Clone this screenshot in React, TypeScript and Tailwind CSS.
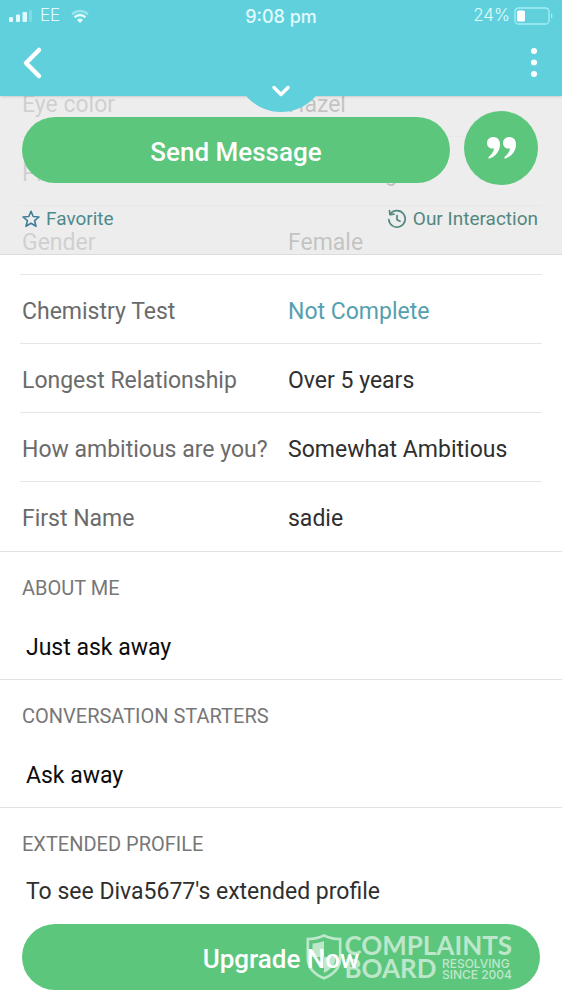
import React from 'react';
import { ChevronDown } from 'lucide-react';

interface Detail {
  label: string;
  value: string;
  pending?: boolean;
}

interface Section {
  title: string;
  text: string;
}

const details: Detail[] = [
  { label: 'Eye color', value: 'Hazel' },
  { label: 'Profession', value: 'Consulting' },
  { label: 'Gender', value: 'Female' },
  { label: 'Chemistry Test', value: 'Not Complete', pending: true },
  { label: 'Longest Relationship', value: 'Over 5 years' },
  { label: 'How ambitious are you?', value: 'Somewhat Ambitious' },
  { label: 'First Name', value: 'sadie' }
];

const sections: Section[] = [
  { title: 'About me', text: 'Just ask away' },
  { title: 'Conversation starters', text: 'Ask away' }
];

const StatusBar: React.FC = () => (
  <div className="grid grid-cols-3 items-center px-2 h-8 font-['Inter',sans-serif] text-[17px] text-[#e2fbff]">
    <div className="flex items-center gap-2">
      <svg className="w-6 h-3" viewBox="0 0 24 12" fill="currentColor">
        <rect x="1" y="7" width="4" height="5" rx="1" />
        <rect x="8" y="4.500" width="4" height="7.500" rx="1" />
        <rect x="14.500" y="2" width="4.500" height="10" rx="1" />
        <rect x="21" y="0" width="3" height="12" rx="1" opacity="0.25" />
      </svg>
      <span className="font-light">EE</span>
      <svg className="ml-[2px] w-5 h-4" viewBox="0 0 20 16" fill="none" stroke="currentColor">
        <path d="M2 6.300a11.500 11.500 0 0 1 16 0" strokeWidth="2.400" opacity="0.45" />
        <path d="M4.700 9.200a7.600 7.600 0 0 1 10.600 0" strokeWidth="2.600" />
        <path d="M10 15l-3-3a4.300 4.300 0 0 1 6 0z" fill="currentColor" stroke="none" />
      </svg>
    </div>
    <span className="text-center text-[18px] font-medium">9:08 pm</span>
    <div className="flex items-center justify-end gap-1">
      <span className="font-light">24%</span>
      <svg className="w-10 h-5" viewBox="0 0 40 20" fill="none">
        <rect x="1" y="2" width="34" height="16" rx="3.500" stroke="#a4eef5" strokeWidth="1.300" />
        <rect x="3" y="4.500" width="8" height="11" rx="1.500" fill="white" />
        <path d="M37 7.500c2 1 2 4 0 5z" fill="#a4eef5" />
      </svg>
    </div>
  </div>
);

const Header: React.FC = () => (
  <header className="relative z-20 h-24 bg-[#5fd0dc] text-white shadow-sm">
    <button
      className="absolute -bottom-4 left-1/2 -translate-x-1/2 flex items-end justify-center w-[92px] h-[92px] pb-[7px] bg-[#5fd0dc] rounded-full"
      aria-label="Show photos"
    >
      <ChevronDown className="w-7 h-7" strokeWidth={3} />
    </button>
    <div className="relative">
      <StatusBar />
      <div className="flex items-center justify-between pl-2 pr-4 h-12">
        <button className="pt-3" aria-label="Back">
          <svg className="w-12 h-9" viewBox="0 0 48 36" fill="none" stroke="currentColor" strokeWidth="4.500" strokeLinecap="round" strokeLinejoin="round">
            <path d="M31 6L18 19l13 13" />
          </svg>
        </button>
        <button className="pt-3" aria-label="More options">
          <svg className="w-6 h-9" viewBox="0 0 24 36" fill="currentColor">
            <circle cx="12" cy="7" r="3" />
            <circle cx="12" cy="18.500" r="3" />
            <circle cx="12" cy="30" r="3" />
          </svg>
        </button>
      </div>
    </div>
  </header>
);

const ActionPanel: React.FC = () => (
  <div className="absolute top-0 inset-x-0 z-10 h-[159px] pt-[15px] pl-[22px] pr-6 bg-[#e8e8e8]/80 border-b border-[#dcdcdc]">
    <div className="flex items-end gap-[14px]">
      <button className="flex-1 h-[66px] mb-[2px] pt-1 bg-[#5cc67d] rounded-full text-white text-[26px] font-medium">
        Send Message
      </button>
      <button
        className="flex items-center justify-center w-[74px] h-[74px] bg-[#5cc67d] rounded-full text-white"
        aria-label="Icebreakers"
      >
        <svg className="w-8 h-6" viewBox="0 0 32 24" fill="currentColor">
          <path d="M8.500 1C4.800 1 2 3.500 2 7c0 3.300 2.400 5.600 5.500 5.600.6 0 1.100-.1 1.500-.2-.4 3.400-2.300 6-5.400 8.500-.8.700 0 2.100 1.100 1.600C11 19.800 15 14.800 15 8.400 15 3.800 12.400 1 8.500 1z" />
          <path d="M24.500 1C20.800 1 18 3.500 18 7c0 3.300 2.400 5.600 5.500 5.600.6 0 1.100-.1 1.500-.2-.4 3.400-2.300 6-5.400 8.500-.8.700 0 2.100 1.100 1.600C27 19.800 31 14.800 31 8.400 31 3.800 28.400 1 24.500 1z" />
        </svg>
      </button>
    </div>
    <div className="flex items-center justify-between mt-[22px] text-[19px] leading-6">
      <button className="flex items-center gap-[6px] text-[#4f8a8b]">
        <svg className="w-[18px] h-[18px]" viewBox="0 0 18 18" fill="none" stroke="#3f7f98" strokeWidth="1.600" strokeLinejoin="round">
          <path d="M9 1.300l2.200 5.200 5.800.5-4.400 3.700 1.400 5.600L9 13.300l-5 3 1.400-5.600L1 7l5.800-.5z" />
        </svg>
        Favorite
      </button>
      <button className="flex items-center gap-[6px] text-[#54877f]">
        <svg className="w-[20px] h-[20px]" viewBox="0 0 20 20" fill="none" stroke="currentColor" strokeWidth="1.700" strokeLinecap="round" strokeLinejoin="round">
          <path d="M3.200 5.300A8.200 8.200 0 1 1 1.800 10.500" />
          <path d="M2.500 1.500L3 5.600l4-.4" />
          <path d="M10 6.500v4.300l3 1.400" />
        </svg>
        Our Interaction
      </button>
    </div>
  </div>
);

const Watermark: React.FC = () => (
  <div className="absolute inset-y-0 right-7 flex items-center gap-[2px] text-white/60 font-['Lato',sans-serif] font-bold pointer-events-none">
    <svg className="w-9 h-[46px]" viewBox="0 0 36 46" fill="none">
      <path d="M18 1.500C13 4 7 5 1.800 5v19c0 10 7 16.500 16.200 20.300C27.200 40.500 34.200 34 34.200 24V5C29 5 23 4 18 1.500z" stroke="currentColor" strokeWidth="2.600" />
      <path d="M18 7C14 8.700 10 9.300 6.500 9.500V23H18z" fill="currentColor" />
      <path d="M18 23h11.500c0 8-5 12.500-11.500 16z" fill="currentColor" />
    </svg>
    <div>
      <div className="text-[26px] leading-[23px]">COMPLAINTS</div>
      <div className="flex items-center justify-between">
        <span className="text-[26px] leading-[23px]">BOARD</span>
        <span className="font-['Inter',sans-serif] font-medium text-[12px] leading-[11px]">
          RESOLVING
          <br />
          SINCE 2004
        </span>
      </div>
    </div>
  </div>
);

const App: React.FC = () => (
  <div className="bg-white font-['Roboto',sans-serif] overflow-hidden">
    <Header />
    <main className="relative flow-root">
      <ActionPanel />
      <dl className="-mt-7 px-5">
        {details.map((d) => (
          <div
            key={d.label}
            className="flex items-center h-[69px] pt-[6px] pl-[2px] border-b border-[#e6e6e6] last:border-b-0 text-[23px]"
          >
            <dt className="w-[266px] shrink-0 text-[#6b6b6b]">{d.label}</dt>
            <dd className={d.pending ? 'text-[#559fb0]' : 'text-[#2f2f2f]'}>{d.value}</dd>
          </div>
        ))}
      </dl>

      {sections.map((s) => (
        <section key={s.title} className="h-32 pt-6 px-[22px] border-t border-[#e2e2e2]">
          <h2 className="text-[20px] leading-6 uppercase text-[#777]">{s.title}</h2>
          <p className="mt-8 pl-1 text-[23px] leading-8 text-[#0c0c0c]">{s.text}</p>
        </section>
      ))}

      <section className="pt-6 pb-3 px-[22px] border-t border-[#e2e2e2]">
        <h2 className="text-[20px] leading-6 uppercase text-[#777]">Extended profile</h2>
        <p className="mt-5 pl-1 text-[23px] leading-8 text-[#2f2f2f]">To see Diva5677's extended profile</p>
        <div className="relative mt-4">
          <button className="block w-full h-[66px] pt-1 bg-[#5cc67d] rounded-full text-white text-[26px] font-medium">
            Upgrade Now
          </button>
          <Watermark />
        </div>
      </section>
    </main>
  </div>
);

export default App;
